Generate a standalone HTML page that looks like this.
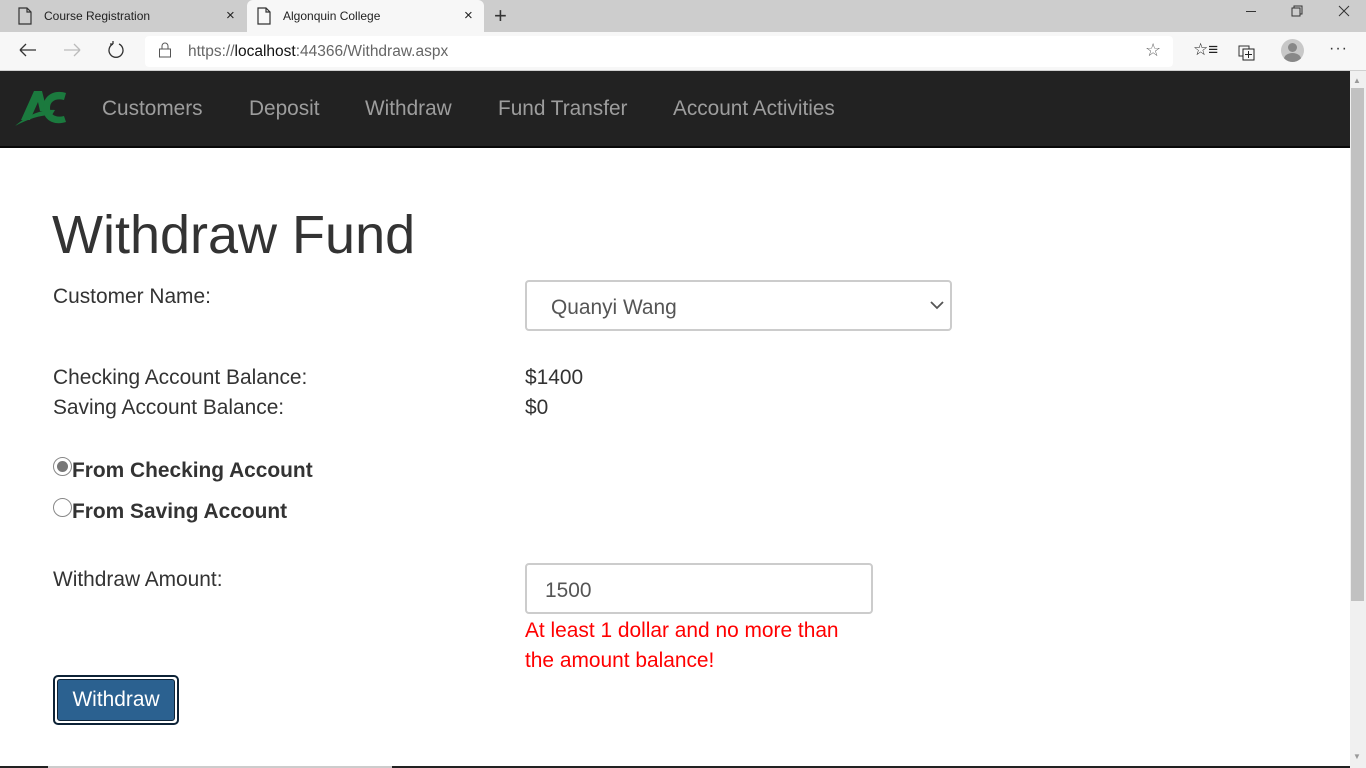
<!DOCTYPE html>
<html><head><meta charset="utf-8"><style>
*{margin:0;padding:0;box-sizing:border-box}
body{width:1366px;height:768px;overflow:hidden;font-family:"Liberation Sans",Arial,sans-serif;background:#fff;position:relative;color:#333}
.a{position:absolute}
.tabs{left:0;top:0;width:1366px;height:32px;background:#cdcdcd}
.tab{top:0;height:32px;font-size:12px;color:#222;line-height:32px}
.tb{left:0;top:32px;width:1366px;height:39px;background:#f7f7f7;border-bottom:1px solid #d0d0d0}
.addr{left:145px;top:36px;width:1028px;height:31px;background:#fff;border-radius:4px}
.nav{left:0;top:71px;width:1350px;height:77px;background:#222;border-bottom:2px solid #080808}
.nl{top:97px;font-size:20.8px;color:#9d9d9d}
.t{font-size:20.9px;color:#333}
</style></head><body>
<div class="a tabs"></div>
<div class="a" style="left:247px;top:0;width:237px;height:33px;background:#f7f7f7;border-radius:6px 6px 0 0"></div>
<svg class="a" style="left:18px;top:7px" width="14" height="18"><path d="M1 1h8l4 4v12H1z M9 1v4h4" fill="none" stroke="#333" stroke-width="1.2"/></svg>
<div class="a tab" style="left:44px">Course Registration</div>
<div class="a tab" style="left:226px;font-size:15px">×</div>
<svg class="a" style="left:257px;top:7px" width="14" height="18"><path d="M1 1h8l4 4v12H1z M9 1v4h4" fill="none" stroke="#333" stroke-width="1.2"/></svg>
<div class="a tab" style="left:283px">Algonquin College</div>
<div class="a tab" style="left:464px;font-size:15px">×</div>
<div class="a" style="left:494px;top:3px;font-size:22px;color:#333;font-weight:300">+</div>
<div class="a" style="left:1246px;top:11px;width:10px;height:1px;background:#333"></div>
<svg class="a" style="left:1291px;top:5px" width="12" height="12"><path d="M1 3h8v8H1z M3 3V1h8v8H9" fill="none" stroke="#333"/></svg>
<svg class="a" style="left:1338px;top:5px" width="12" height="12"><path d="M1 1l10 10M11 1L1 11" stroke="#333"/></svg>
<div class="a tb"></div>
<div class="a addr"></div>
<svg class="a" style="left:18px;top:42px" width="20" height="16"><path d="M2 8h16M2 8l6-6M2 8l6 6" fill="none" stroke="#333" stroke-width="1.3"/></svg>
<svg class="a" style="left:62px;top:42px" width="20" height="16"><path d="M2 8h16M18 8l-6-6M18 8l-6 6" fill="none" stroke="#bbb" stroke-width="1.3"/></svg>
<svg class="a" style="left:106px;top:41px" width="20" height="20"><path d="M7 3A7 7 0 1 0 13 3M7 3V0M7 3H4" fill="none" stroke="#333" stroke-width="1.3"/></svg>
<svg class="a" style="left:158px;top:42px" width="14" height="17"><rect x="1.5" y="7" width="11" height="8" fill="none" stroke="#555"/><path d="M4 7V4a3 3 0 0 1 6 0v3" fill="none" stroke="#555"/></svg>
<div class="a" style="left:188px;top:43px;font-size:15.5px;color:#666">https://<span style="color:#111">localhost</span>:44366/Withdraw.aspx</div>
<div class="a" style="left:1145px;top:40px;font-size:18px;color:#666">☆</div>
<div class="a" style="left:1193px;top:40px;font-size:17px;color:#222">☆≡</div>
<svg class="a" style="left:1238px;top:43px" width="18" height="18"><rect x="1" y="3" width="10" height="10" fill="none" stroke="#333"/><rect x="5" y="6" width="11" height="11" fill="#f7f7f7" stroke="#222"/><path d="M10.5 8v7M7 11.5h7" stroke="#222"/></svg>
<div class="a" style="left:1281px;top:39px;width:23px;height:23px;border-radius:50%;background:#c8c8c8;overflow:hidden"><div class="a" style="left:7px;top:4px;width:9px;height:9px;border-radius:50%;background:#888"></div><div class="a" style="left:3px;top:14px;width:17px;height:12px;border-radius:50%;background:#888"></div></div>
<div class="a" style="left:1329px;top:40px;font-size:16px;color:#333;letter-spacing:1px">···</div>
<div class="a nav"></div>
<svg class="a" style="left:15px;top:90px" width="52" height="38"><path d="M6 30L19 1h8l5 20h-7l-2-9-8 18z" fill="#1b7a3e"/><path d="M0 36c14-12 28-17 40-16l-3 5c-12 0-24 4-37 11z" fill="#1b7a3e"/><path d="M51 3c-12-4-23 3-23 15s11 18 23 14l-2-6c-8 2-14-1-14-8s6-10 14-8z" fill="#1b7a3e"/></svg>
<div class="a nl" style="left:102px">Customers</div>
<div class="a nl" style="left:249px">Deposit</div>
<div class="a nl" style="left:365px">Withdraw</div>
<div class="a nl" style="left:498px">Fund Transfer</div>
<div class="a nl" style="left:673px">Account Activities</div>
<div class="a" style="left:1350px;top:71px;width:16px;height:697px;background:#f0f0f0"></div>
<div class="a" style="left:1353px;top:76px;font-size:8px;color:#999">▲</div>
<div class="a" style="left:1353px;top:752px;font-size:8px;color:#999">▼</div>
<div class="a" style="left:1351px;top:88px;width:13px;height:513px;background:#c1c1c1"></div>
<div class="a" style="left:52px;top:204px;font-size:54px;color:#333">Withdraw Fund</div>
<div class="a t" style="left:53px;top:285px">Customer Name:</div>
<div class="a" style="left:525px;top:280px;width:427px;height:51px;border:2px solid #ccc;border-radius:4px"></div>
<div class="a t" style="left:551px;top:296px;color:#555">Quanyi Wang</div>
<svg class="a" style="left:930px;top:300px" width="14" height="10"><path d="M1 2l6 6 6-6" fill="none" stroke="#555" stroke-width="1.8"/></svg>
<div class="a t" style="left:53px;top:366px">Checking Account Balance:</div>
<div class="a t" style="left:53px;top:396px">Saving Account Balance:</div>
<div class="a t" style="left:525px;top:366px">$1400</div>
<div class="a t" style="left:525px;top:396px">$0</div>
<div class="a" style="left:53px;top:457px;width:19px;height:19px;border-radius:50%;border:1px solid #888"></div>
<div class="a" style="left:57px;top:461px;width:11px;height:11px;border-radius:50%;background:#777"></div>
<div class="a t" style="left:72px;top:459px;font-weight:bold">From Checking Account</div>
<div class="a" style="left:53px;top:498px;width:19px;height:19px;border-radius:50%;border:1px solid #888"></div>
<div class="a t" style="left:72px;top:500px;font-weight:bold">From Saving Account</div>
<div class="a t" style="left:53px;top:568px">Withdraw Amount:</div>
<div class="a" style="left:525px;top:563px;width:348px;height:51px;border:2px solid #ccc;border-radius:4px"></div>
<div class="a t" style="left:545px;top:579px;color:#555">1500</div>
<div class="a t" style="left:525px;top:619px;color:#f00">At least 1 dollar and no more than</div>
<div class="a t" style="left:525px;top:649px;color:#f00">the amount balance!</div>
<div class="a" style="left:53px;top:675px;width:126px;height:50px;border:2px solid #0d2236;border-radius:5px;background:#fff"></div>
<div class="a" style="left:57px;top:679px;width:118px;height:42px;background:#2b6190;border:1px solid #0d2236;border-radius:3px;color:#fff;font-size:20.9px;text-align:center;line-height:40px">Withdraw</div>
<div class="a" style="left:0;top:766px;width:48px;height:2px;background:#222"></div>
<div class="a" style="left:48px;top:766px;width:344px;height:2px;background:#ccc"></div>
<div class="a" style="left:392px;top:766px;width:958px;height:2px;background:#222"></div>
</body></html>
